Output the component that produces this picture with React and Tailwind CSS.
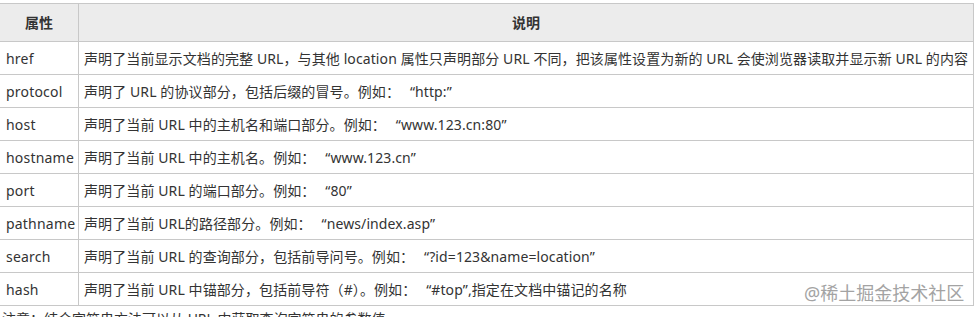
import React from 'react';

const rows = [
    ['href', '声明了当前显示文档的完整 URL，与其他 location 属性只声明部分 URL 不同，把该属性设置为新的 URL 会使浏览器读取并显示新 URL 的内容'],
    ['protocol', '声明了 URL 的协议部分，包括后缀的冒号。例如：“http:”'],
    ['host', '声明了当前 URL 中的主机名和端口部分。例如：“www.123.cn:80”'],
    ['hostname', '声明了当前 URL 中的主机名。例如：“www.123.cn”'],
    ['port', '声明了当前 URL 的端口部分。例如：“80”'],
    ['pathname', '声明了当前 URL的路径部分。例如：“news/index.asp”'],
    ['search', '声明了当前 URL 的查询部分，包括前导问号。例如：“?id=123&name=location”'],
    ['hash', '声明了当前 URL 中锚部分，包括前导符（#）。例如：“#top”,指定在文档中锚记的名称'],
];

// opening curly quote is full-width in the original
const Desc = ({ text }) => {
    const parts = text.split(/(“)/);
    return parts.map((p, i) =>
        p === '“' ? (
            <span key={i} className="inline-block w-[15px] text-right">“</span>
        ) : (
            <React.Fragment key={i}>{p}</React.Fragment>
        )
    );
};

const App = () => {
    return (
        <div
            className="relative w-[976px] h-[317px] overflow-hidden bg-white text-[#333] text-[14px]"
            style={{ fontFamily: '"Noto Sans", "Noto Sans CJK SC", sans-serif' }}
        >
            <div className="pt-[3px] -ml-px">
                <table className="w-[975px] border-collapse table-fixed">
                    <colgroup>
                        <col className="w-[79px]" />
                        <col />
                    </colgroup>
                    <thead>
                        <tr className="h-[38px] bg-[#ececec]">
                            <th className="border border-[#c8c8c8] font-bold text-center">属性</th>
                            <th className="border border-[#c8c8c8] font-bold text-center">说明</th>
                        </tr>
                    </thead>
                    <tbody>
                        {rows.map(([name, desc]) => (
                            <tr key={name} className="h-[33px]">
                                <td className="border border-[#c8c8c8] pl-[6px] whitespace-nowrap tracking-[0.2px]">{name}</td>
                                <td className="border border-[#c8c8c8] pl-[5px] whitespace-nowrap tracking-[0.1px]">
                                    <Desc text={desc} />
                                </td>
                            </tr>
                        ))}
                    </tbody>
                </table>
            </div>
            <p className="pl-[2px] pt-[2px] whitespace-nowrap">注意：结合字符串方法可以从 URL 中获取查询字符串的参数值</p>

            {/* watermark */}
            <div className="absolute left-[804px] top-[280px] whitespace-nowrap text-[18px] text-[#a3a3a3] [text-shadow:0_0_1px_#fff]">
                @稀土掘金技术社区
            </div>
        </div>
    );
};

export default App;
